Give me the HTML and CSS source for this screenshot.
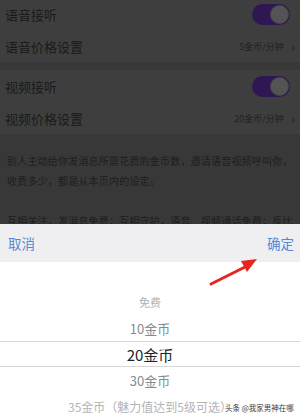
FILE: index.html
```html
<!DOCTYPE html>
<html lang="zh">
<head>
<meta charset="utf-8">
<link rel="stylesheet" href="styles.css">
</head>
<body>
<div class="screen">
  <div class="group">
    <div class="row row-first">
      <span class="label">语音接听</span>
      <span class="switch"><span class="knob"></span></span>
    </div>
    <div class="row">
      <span class="label">语音价格设置</span>
      <span class="value">5金币/分钟<span class="chev">›</span></span>
    </div>
  </div>
  <div class="group group-second">
    <div class="row">
      <span class="label">视频接听</span>
      <span class="switch"><span class="knob"></span></span>
    </div>
    <div class="row">
      <span class="label">视频价格设置</span>
      <span class="value">20金币/分钟<span class="chev">›</span></span>
    </div>
  </div>
  <div class="desc">
    <p>别人主动给你发消息所需花费的金币数，邀请语音视频呼叫你，收费多少，都是从本页内的设定。</p>
    <p>互相关注，发消息免费；互相守护，语音、视频通话免费；反比</p>
  </div>

  <div class="sheet">
    <div class="toolbar">
      <span class="btn">取消</span>
      <span class="btn">确定</span>
    </div>
    <div class="picker">
      <div class="opt opt-far">免费</div>
      <div class="opt">10金币</div>
      <div class="opt opt-sel">20金币</div>
      <div class="opt">30金币</div>
      <div class="opt opt-last">35金币（魅力值达到5级可选）</div>
    </div>
    <svg class="arrow" width="60" height="34" viewBox="0 0 60 34">
      <line x1="4" y1="30" x2="40" y2="12" stroke="#e5261f" stroke-width="3" stroke-linecap="round"/>
      <polygon points="50,5 34,7 40,18" fill="#e5261f"/>
    </svg>
    <span class="mark">头条 @我家男神在哪</span>
  </div>
</div>
</body>
</html>
```

FILE: styles.css
```css
* { box-sizing: border-box; }
html, body { margin: 0; padding: 0; }
body {
  width: 300px;
  height: 420px;
  overflow: hidden;
  font-family: "Noto Sans CJK SC", "Noto Sans", sans-serif;
  background: #383838;
}
.screen {
  position: relative;
  width: 300px;
  height: 420px;
  overflow: hidden;
}
.group {
  background: #3e3e3e;
}
.group-second {
  margin-top: 8px;
}
.row {
  height: 32px;
  display: flex;
  align-items: center;
  justify-content: space-between;
  padding: 0 10px 0 5px;
}
.row-first {
  height: 31px;
  margin-top: -1px;
}
.label {
  font-size: 13px;
  color: #1a1a1a;
}
.value {
  font-size: 9px;
  color: #222;
  display: flex;
  align-items: center;
  margin-right: -5px;
}
.chev {
  font-size: 14px;
  margin-left: 7px;
  color: #222;
  line-height: 1;
}
.switch {
  width: 38px;
  height: 21px;
  border-radius: 11px;
  background: #2f1752;
  display: flex;
  justify-content: flex-end;
  align-items: center;
  padding: 1px;
}
.knob {
  width: 19px;
  height: 19px;
  border-radius: 50%;
  background: #545454;
  border: 1px solid #484848;
}
.desc {
  padding: 17px 7px 0 7px;
}
.desc p {
  margin: 0 0 20px 0;
  font-size: 10px;
  letter-spacing: 0.2px;
  line-height: 20px;
  color: #1e1e1e;
}
.sheet {
  position: absolute;
  left: 0;
  top: 224px;
  width: 300px;
  height: 196px;
  background: #fff;
}
.toolbar {
  height: 38px;
  background: #efeff1;
  display: flex;
  justify-content: space-between;
  align-items: center;
  padding: 0 6px 0 8px;
}
.btn {
  font-size: 13.5px;
  color: #5589d6;
}
.picker {
  padding-top: 27px;
  display: flex;
  flex-direction: column;
}
.opt {
  height: 26px;
  display: flex;
  align-items: center;
  justify-content: center;
  font-size: 13px;
  color: #8a8a8a;
}
.opt-far {
  font-size: 11px;
  color: #b0b0b0;
}
.opt-sel {
  font-size: 15px;
  color: #222;
  border-top: 1px solid #d6d6d6;
  border-bottom: 1px solid #d6d6d6;
}
.opt-last {
  font-size: 12px;
  color: #b4b4b4;
  padding-right: 0;
}
.arrow {
  position: absolute;
  left: 207px;
  top: 30px;
}
.mark {
  position: absolute;
  left: 225px;
  top: 178px;
  font-size: 7.5px;
  white-space: nowrap;
  color: #3a3a3a;
  text-shadow: 0 0 2px #fff, 0 0 2px #fff;
}
```
